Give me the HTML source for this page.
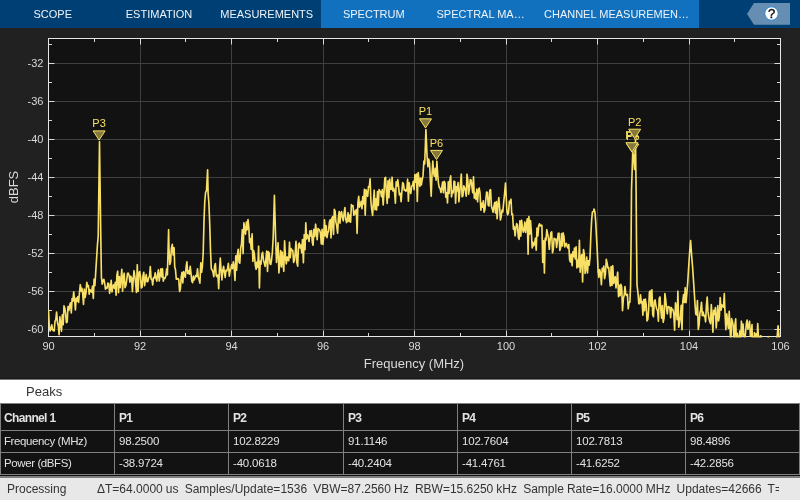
<!DOCTYPE html>
<html lang="en"><head><meta charset="utf-8"><title>Spectrum Analyzer</title>
<style>
html,body{margin:0;padding:0;background:#212121;}
body{width:800px;height:500px;position:relative;overflow:hidden;font-family:"Liberation Sans",Arial,sans-serif;}
svg,#tb,#pkh,#tbl,#sb{will-change:transform;}
#tb{position:absolute;left:0;top:0;width:800px;height:28px;background:#003f73;}
#tb .ctx{position:absolute;left:321px;top:0;width:378px;height:28px;background:#1171be;}
#tb .tab{position:absolute;top:0;height:28px;line-height:28px;font-size:11px;color:#eef3f8;text-align:center;white-space:nowrap;}
#help{position:absolute;left:747px;top:3px;}
.tk{font:11px "Liberation Sans",Arial,sans-serif;fill:#d9d9d9;}
.ax{font:13px "Liberation Sans",Arial,sans-serif;fill:#d9d9d9;}
.pk{font:11px "Liberation Sans",Arial,sans-serif;fill:#f7e065;}
#pkh{position:absolute;left:0;top:378px;width:800px;height:25px;box-sizing:border-box;border-top:1px solid #191919;box-shadow:inset 0 1px 0 #777;background:#fff;color:#333;font-size:13px;line-height:25px;}
#pkh span{position:absolute;left:26px;}
#tbl{position:absolute;left:0;top:403px;width:800px;height:74px;background:#121212;}
#tbl .c{position:absolute;color:#e2e2e2;font-size:11.5px;letter-spacing:-0.4px;padding-left:3px;box-sizing:border-box;white-space:nowrap;overflow:hidden;}
#tbl .n{letter-spacing:-0.2px;padding-left:4px;}
#tbl .h{font-weight:bold;font-size:12px;letter-spacing:-0.65px;}
#tbl i{position:absolute;background:#808080;display:block;}
#sb{position:absolute;left:0;top:476px;width:800px;height:24px;background:#e8e8e8;border-top:2px solid #7e7e7e;box-sizing:border-box;word-spacing:-0.25px;color:#333;font-size:12px;line-height:25px;white-space:nowrap;overflow:hidden;}
#sb span{position:absolute;top:-1px}
</style></head><body>
<div id="tb"><div class="ctx"></div>
<div class="tab" style="left:0;width:105.5px">SCOPE</div>
<div class="tab" style="left:107px;width:104px">ESTIMATION</div>
<div class="tab" style="left:214.7px;width:104px">MEASUREMENTS</div>
<div class="tab" style="left:321.8px;width:104px">SPECTRUM</div>
<div class="tab" style="left:428.6px;width:104px">SPECTRAL MA…</div>
<div class="tab" style="left:544px;text-align:left">CHANNEL MEASUREMEN…</div>
<svg id="help" width="44" height="22" viewBox="0 0 44 22"><path d="M0 11L7 0H43V21.8H7Z" fill="#668eb2"/><circle cx="24.5" cy="10.5" r="6.7" fill="#fff" stroke="#2a86d4" stroke-width="0.9"/><text x="24.5" y="15.2" text-anchor="middle" style="font:13px 'Liberation Sans',Arial,sans-serif" fill="#111" stroke="#111" stroke-width="0.45">?</text></svg>
</div>
<svg width="800" height="352" viewBox="0 28 800 352" style="position:absolute;left:0;top:28px">
<rect x="0" y="28" width="800" height="352" fill="#212121"/>
<rect x="48" y="38" width="733" height="299" fill="#121212"/>
<path d="M140.5 39V336M231.5 39V336M323.5 39V336M414.5 39V336M506.5 39V336M597.5 39V336M689.5 39V336M49 329.5H780M49 291.5H780M49 253.5H780M49 215.5H780M49 177.5H780M49 139.5H780M49 101.5H780M49 63.5H780" stroke="#3f3f3f" stroke-width="1" fill="none"/>
<rect x="48.5" y="38.5" width="732" height="298" fill="none" stroke="#e6e6e6" stroke-width="1"/>
<path d="M94.5 336v-3.0M94.5 39v3.0M140.5 336v-5.5M140.5 39v5.5M185.5 336v-3.0M185.5 39v3.0M231.5 336v-5.5M231.5 39v5.5M277.5 336v-3.0M277.5 39v3.0M323.5 336v-5.5M323.5 39v5.5M368.5 336v-3.0M368.5 39v3.0M414.5 336v-5.5M414.5 39v5.5M460.5 336v-3.0M460.5 39v3.0M506.5 336v-5.5M506.5 39v5.5M551.5 336v-3.0M551.5 39v3.0M597.5 336v-5.5M597.5 39v5.5M643.5 336v-3.0M643.5 39v3.0M689.5 336v-5.5M689.5 39v5.5M734.5 336v-3.0M734.5 39v3.0M49 329.5h5.5M780 329.5h-5.5M49 310.5h3.0M780 310.5h-3.0M49 291.5h5.5M780 291.5h-5.5M49 272.5h3.0M780 272.5h-3.0M49 253.5h5.5M780 253.5h-5.5M49 234.5h3.0M780 234.5h-3.0M49 215.5h5.5M780 215.5h-5.5M49 196.5h3.0M780 196.5h-3.0M49 177.5h5.5M780 177.5h-5.5M49 158.5h3.0M780 158.5h-3.0M49 139.5h5.5M780 139.5h-5.5M49 120.5h3.0M780 120.5h-3.0M49 101.5h5.5M780 101.5h-5.5M49 82.5h3.0M780 82.5h-3.0M49 63.5h5.5M780 63.5h-5.5M49 44.5h3.0M780 44.5h-3.0" stroke="#d9d9d9" stroke-width="1" fill="none"/>
<clipPath id="c"><rect x="48" y="38" width="733" height="299.5"/></clipPath>
<path clip-path="url(#c)" d="M48.5 310.2 L49.3 326.1 L50.1 331.0 L50.9 328.5 L51.8 324.9 L52.6 330.1 L53.4 330.7 L54.2 331.0 L55.0 321.3 L55.8 319.6 L56.6 312.1 L57.5 322.8 L58.3 325.7 L59.1 334.8 L59.9 316.8 L60.7 324.3 L61.5 331.2 L62.3 314.8 L63.2 324.6 L64.0 305.9 L64.8 308.2 L65.6 313.4 L66.4 322.6 L67.2 322.0 L68.0 306.6 L68.9 310.4 L69.7 305.0 L70.5 302.8 L71.3 312.9 L72.1 298.6 L72.9 301.1 L73.7 291.8 L74.6 300.3 L75.4 309.9 L76.2 298.1 L77.0 301.1 L77.8 296.7 L78.6 302.4 L79.4 293.3 L80.3 284.7 L81.1 291.1 L81.9 288.2 L82.7 293.7 L83.5 304.4 L84.3 289.0 L85.1 297.5 L86.0 292.8 L86.8 282.4 L87.6 286.6 L88.4 285.5 L89.2 294.1 L90.0 289.7 L90.8 291.4 L91.7 292.1 L92.5 286.2 L93.3 298.4 L94.1 279.2 L94.9 285.7 L95.7 272.4 L96.5 260.1 L97.4 245.2 L98.2 236.5 L99.0 178.8 L99.5 141.7 L100.6 222.5 L101.4 277.1 L102.2 284.1 L103.1 280.3 L103.9 279.3 L104.7 283.5 L105.5 289.3 L106.3 287.3 L107.1 288.2 L107.9 283.1 L108.8 283.7 L109.6 293.3 L110.4 288.6 L111.2 280.3 L112.0 292.0 L112.8 286.6 L113.6 284.8 L114.5 288.4 L115.3 282.4 L116.1 295.1 L116.9 275.2 L117.7 271.2 L118.5 292.7 L119.3 276.6 L120.2 287.7 L121.0 278.5 L121.8 269.3 L122.6 291.3 L123.4 277.4 L124.2 273.2 L125.0 287.6 L125.9 285.5 L126.7 280.4 L127.5 273.4 L128.3 273.2 L129.1 275.5 L129.9 282.2 L130.7 276.2 L131.6 277.8 L132.4 291.7 L133.2 279.9 L134.0 270.7 L134.8 276.0 L135.6 282.8 L136.4 292.5 L137.3 264.7 L138.1 291.4 L138.9 273.5 L139.7 271.5 L140.5 276.6 L141.3 287.9 L142.1 287.1 L143.0 275.6 L143.8 272.3 L144.6 285.6 L145.4 279.8 L146.2 274.5 L147.0 281.6 L147.8 281.7 L148.7 277.4 L149.5 276.4 L150.3 266.6 L151.1 279.1 L151.9 279.2 L152.7 284.9 L153.5 277.5 L154.4 278.0 L155.2 272.9 L156.0 278.4 L156.8 281.1 L157.6 274.8 L158.4 269.8 L159.2 281.0 L160.1 275.4 L160.9 268.9 L161.7 277.0 L162.5 268.7 L163.3 281.1 L164.1 278.1 L164.9 278.4 L165.8 276.0 L166.6 269.1 L167.4 274.8 L168.6 229.7 L169.0 248.5 L169.8 264.5 L170.6 262.0 L171.4 248.5 L172.3 244.4 L173.1 254.9 L174.1 247.7 L174.7 266.8 L175.5 269.8 L176.3 279.2 L177.1 279.1 L178.0 278.5 L178.8 279.8 L179.6 291.5 L180.4 288.7 L181.2 277.3 L182.0 272.3 L182.8 283.0 L183.7 271.6 L184.5 274.8 L185.3 277.2 L186.1 267.2 L186.9 261.9 L187.7 273.4 L188.5 270.9 L189.4 274.1 L190.2 266.4 L191.0 273.4 L191.8 281.1 L192.6 282.7 L193.4 276.1 L194.2 279.9 L195.1 277.2 L195.9 275.3 L196.7 276.4 L197.5 268.9 L198.3 277.5 L199.1 279.4 L199.9 283.2 L200.8 262.9 L201.6 272.3 L202.4 266.3 L203.2 252.8 L204.0 221.0 L204.8 201.0 L205.6 192.4 L206.5 190.6 L207.6 169.8 L208.1 193.2 L208.9 203.3 L209.7 223.5 L210.5 250.2 L211.3 269.0 L212.2 269.9 L213.0 272.2 L213.8 276.6 L214.6 266.2 L215.4 263.5 L216.2 275.6 L217.0 276.7 L217.9 274.9 L218.7 288.6 L219.5 269.7 L220.3 258.0 L221.1 270.7 L221.9 280.0 L222.7 270.6 L223.6 266.3 L224.4 272.5 L225.2 277.4 L226.0 270.3 L226.8 270.9 L227.6 268.2 L228.4 263.3 L229.3 276.1 L230.1 271.1 L230.9 268.3 L231.7 264.7 L232.5 268.7 L233.3 261.9 L234.1 266.4 L235.0 280.4 L235.8 255.8 L236.6 270.2 L237.4 254.7 L238.2 249.3 L239.0 262.0 L239.8 263.2 L240.7 247.8 L241.5 244.1 L242.3 229.7 L243.1 253.6 L243.9 222.8 L244.7 228.8 L245.5 234.2 L246.4 222.1 L247.2 229.8 L248.0 219.6 L248.8 227.1 L249.6 242.7 L250.4 238.5 L251.2 249.5 L252.1 233.9 L252.9 261.4 L253.7 250.6 L254.5 255.2 L255.3 265.1 L256.1 269.3 L256.9 262.0 L257.8 267.4 L258.6 246.2 L259.4 287.9 L260.2 261.2 L261.0 264.1 L261.8 255.1 L262.6 252.3 L263.5 260.2 L264.3 263.1 L265.1 266.4 L265.9 259.3 L266.7 251.1 L267.5 271.4 L268.3 251.7 L269.2 252.9 L270.0 263.8 L270.8 264.4 L271.6 259.5 L272.4 251.9 L273.2 237.0 L274.4 195.4 L274.9 213.2 L275.7 240.8 L276.5 262.4 L277.3 252.2 L278.1 242.7 L278.9 273.0 L279.7 263.0 L280.6 250.5 L281.4 266.9 L282.2 252.1 L283.0 262.6 L283.8 271.3 L284.6 240.8 L285.4 256.4 L286.3 263.8 L287.1 256.9 L287.9 260.5 L288.7 260.7 L289.5 242.2 L290.3 257.7 L291.1 248.5 L292.0 250.4 L292.8 250.5 L293.6 262.4 L294.4 260.2 L295.2 253.0 L296.0 241.4 L296.8 262.4 L297.7 266.1 L298.5 244.6 L299.3 243.1 L300.1 248.0 L300.9 245.1 L301.7 252.7 L302.5 239.5 L303.4 262.8 L304.2 234.7 L305.0 249.7 L305.8 222.8 L306.6 238.9 L307.4 234.8 L308.2 237.2 L309.1 241.5 L309.9 230.9 L310.7 235.9 L311.5 230.5 L312.3 242.2 L313.1 245.3 L313.9 229.3 L314.8 236.5 L315.6 224.2 L316.4 232.1 L317.2 239.6 L318.0 228.6 L318.8 229.3 L319.6 230.3 L320.5 233.0 L321.3 244.0 L322.1 229.4 L322.9 244.5 L323.7 236.3 L324.5 219.8 L325.3 235.9 L326.2 225.7 L327.0 237.6 L327.8 232.9 L328.6 230.7 L329.4 222.0 L330.2 219.7 L331.0 238.0 L331.9 218.4 L332.7 216.6 L333.5 234.5 L334.3 209.4 L335.1 211.0 L335.9 222.1 L336.7 225.6 L337.6 233.2 L338.4 217.7 L339.2 211.6 L340.0 223.1 L340.8 212.9 L341.6 211.7 L342.4 217.6 L343.3 220.8 L344.1 213.0 L344.9 207.6 L345.7 218.5 L346.5 222.7 L347.3 221.0 L348.1 212.7 L349.0 221.6 L349.8 215.0 L350.6 222.1 L351.4 204.6 L352.2 206.1 L353.0 205.7 L353.8 215.2 L354.7 211.1 L355.5 213.8 L356.3 209.5 L357.1 233.4 L357.9 202.9 L358.7 196.3 L359.5 207.1 L360.4 204.8 L361.2 201.4 L362.0 208.7 L362.8 196.5 L363.6 204.0 L364.4 189.3 L365.2 215.1 L366.1 189.9 L366.9 193.3 L367.7 196.3 L368.5 186.5 L369.3 186.8 L370.1 178.9 L370.9 201.5 L371.8 209.9 L372.6 215.5 L373.4 202.2 L374.2 190.2 L375.0 209.7 L375.8 198.9 L376.6 210.0 L377.5 191.6 L378.3 205.5 L379.1 189.6 L379.9 191.3 L380.7 191.8 L381.5 196.7 L382.3 189.6 L383.2 205.0 L384.0 192.6 L384.8 178.2 L385.6 177.4 L386.4 193.2 L387.2 203.5 L388.0 180.8 L388.9 197.6 L389.7 179.0 L390.5 189.5 L391.3 189.3 L392.1 177.2 L392.9 191.0 L393.7 188.3 L394.6 192.1 L395.4 203.2 L396.2 181.8 L397.0 186.1 L397.8 179.7 L398.6 186.8 L399.4 194.8 L400.3 193.3 L401.1 201.6 L401.9 191.4 L402.7 182.6 L403.5 183.9 L404.3 190.3 L405.1 189.6 L406.0 191.3 L406.8 190.4 L407.6 179.2 L408.4 201.1 L409.2 182.7 L410.0 190.5 L410.8 193.5 L411.7 186.1 L412.5 185.5 L413.3 181.3 L414.1 189.6 L414.9 174.7 L415.7 182.2 L416.5 174.0 L417.3 201.4 L418.2 172.6 L419.0 179.8 L419.8 186.3 L420.6 178.1 L421.4 184.8 L422.2 179.5 L423.0 175.9 L423.9 161.0 L424.7 163.9 L425.5 142.1 L425.9 129.6 L427.1 156.8 L427.9 166.8 L428.7 159.1 L429.6 163.3 L430.4 181.2 L431.2 196.3 L432.0 175.1 L432.8 161.0 L433.6 172.6 L434.4 176.2 L435.3 168.3 L436.1 180.1 L436.9 161.2 L437.7 174.5 L438.5 183.8 L439.3 187.6 L440.1 188.3 L441.0 192.5 L441.8 187.5 L442.6 182.0 L443.4 192.8 L444.2 181.4 L445.0 182.9 L445.8 197.3 L446.7 192.9 L447.5 203.0 L448.3 181.8 L449.1 193.5 L449.9 180.4 L450.7 175.9 L451.5 197.0 L452.4 190.9 L453.2 192.8 L454.0 181.2 L454.8 181.7 L455.6 203.1 L456.4 186.5 L457.2 190.9 L458.1 182.6 L458.9 201.8 L459.7 193.3 L460.5 183.4 L461.3 174.0 L462.1 196.8 L462.9 195.9 L463.8 185.9 L464.6 187.8 L465.4 190.6 L466.2 196.1 L467.0 174.2 L467.8 179.7 L468.6 194.2 L469.5 188.3 L470.3 179.5 L471.1 180.2 L471.9 186.5 L472.7 192.6 L473.5 176.8 L474.3 198.2 L475.2 193.3 L476.0 199.3 L476.8 189.0 L477.6 201.8 L478.4 190.5 L479.2 188.1 L480.0 192.8 L480.9 210.2 L481.7 203.2 L482.5 207.2 L483.3 200.8 L484.1 212.1 L484.9 209.8 L485.7 200.7 L486.6 192.0 L487.4 192.4 L488.2 205.2 L489.0 206.0 L489.8 190.4 L490.6 189.7 L491.4 206.1 L492.3 209.1 L493.1 212.2 L493.9 206.4 L494.7 202.6 L495.5 213.0 L496.3 201.5 L497.1 218.8 L498.0 204.3 L498.8 197.6 L499.6 206.9 L500.4 220.0 L501.2 216.5 L502.0 210.1 L502.8 211.9 L503.7 202.4 L504.5 194.5 L505.5 183.1 L506.1 194.3 L506.9 211.2 L507.7 214.8 L508.5 212.8 L509.4 201.2 L510.2 203.2 L511.0 199.2 L511.8 214.7 L512.6 214.2 L513.4 229.1 L514.2 226.6 L515.1 235.8 L515.9 228.3 L516.7 223.5 L517.5 225.4 L518.3 237.3 L519.1 239.3 L519.9 220.8 L520.8 236.2 L521.6 220.2 L522.4 227.0 L523.2 232.2 L524.0 230.2 L524.8 222.0 L525.6 232.4 L526.5 224.2 L527.3 218.9 L528.1 254.3 L528.9 216.6 L529.7 234.2 L530.5 220.6 L531.3 231.3 L532.2 248.0 L533.0 242.3 L533.8 245.8 L534.6 243.8 L535.4 238.2 L536.2 250.2 L537.0 228.0 L537.9 235.9 L538.7 225.9 L539.5 223.8 L540.3 225.9 L541.1 225.2 L541.9 225.4 L542.7 262.5 L543.6 240.9 L544.4 273.1 L545.2 238.4 L546.0 240.1 L546.8 229.7 L547.6 233.8 L548.4 237.8 L549.3 249.4 L550.1 240.3 L550.9 232.8 L551.7 231.8 L552.5 252.8 L553.3 249.4 L554.1 238.3 L555.0 239.5 L555.8 239.0 L556.6 247.4 L557.4 240.8 L558.2 233.3 L559.0 233.2 L559.8 250.5 L560.7 247.3 L561.5 233.7 L562.3 245.9 L563.1 232.9 L563.9 236.1 L564.7 246.9 L565.5 244.2 L566.4 243.3 L567.2 246.9 L568.0 248.1 L568.8 244.5 L569.6 259.8 L570.4 262.0 L571.2 254.2 L572.1 265.8 L572.9 251.8 L573.7 256.7 L574.5 248.0 L575.3 258.9 L576.1 246.9 L576.9 268.0 L577.8 260.1 L578.6 267.0 L579.4 240.3 L580.2 272.2 L581.0 257.5 L581.8 254.6 L582.6 281.9 L583.5 249.5 L584.3 254.0 L585.1 273.4 L585.9 268.6 L586.7 257.0 L587.5 272.9 L588.3 260.9 L589.2 265.2 L590.0 257.4 L590.8 236.9 L591.6 220.7 L592.4 212.1 L593.6 211.6 L594.0 209.0 L594.9 211.9 L595.7 221.9 L596.5 237.2 L597.3 251.7 L598.1 271.5 L598.9 277.4 L599.7 269.7 L600.6 273.7 L601.4 284.8 L602.2 268.3 L603.0 271.5 L603.8 266.0 L604.6 278.7 L605.4 274.2 L606.3 259.4 L607.1 263.1 L607.9 268.0 L608.7 267.5 L609.5 276.6 L610.3 286.0 L611.1 266.6 L612.0 285.4 L612.8 265.7 L613.6 283.5 L614.4 279.3 L615.2 276.7 L616.0 288.0 L616.8 279.6 L617.7 272.2 L618.5 296.6 L619.3 285.2 L620.1 295.6 L620.9 284.4 L621.7 287.1 L622.5 310.6 L623.4 298.4 L624.2 295.1 L625.0 286.5 L625.8 294.7 L626.6 295.3 L627.4 294.3 L628.2 308.8 L629.1 302.4 L629.9 302.2 L630.6 285.0 L631.1 240.0 L631.5 190.0 L632.7 153.4 L633.6 154.8 L634.5 169.5 L635.5 140.0 L636.1 190.0 L636.5 240.0 L637.0 285.0 L638.0 293.1 L638.8 303.7 L639.6 303.7 L640.5 294.8 L641.3 303.0 L642.1 301.7 L642.9 315.1 L643.7 299.6 L644.5 310.7 L645.3 299.0 L646.2 304.6 L647.0 321.0 L647.8 319.4 L648.6 310.6 L649.4 292.1 L650.2 290.9 L651.0 306.1 L651.9 289.9 L652.7 314.4 L653.5 316.8 L654.3 301.0 L655.1 299.9 L655.9 305.6 L656.7 309.0 L657.6 310.9 L658.4 321.3 L659.2 298.3 L660.0 296.9 L660.8 309.4 L661.6 318.3 L662.4 305.5 L663.2 322.3 L664.1 317.6 L664.9 293.5 L665.7 299.3 L666.5 308.2 L667.3 313.8 L668.1 306.5 L668.9 306.8 L669.8 307.5 L670.6 317.7 L671.4 307.6 L672.2 309.8 L673.0 309.9 L673.8 313.8 L674.6 330.1 L675.5 302.9 L676.3 306.6 L677.1 319.6 L677.9 291.2 L678.7 327.2 L679.5 323.6 L680.3 317.2 L681.2 305.4 L682.0 329.8 L682.8 301.2 L683.6 294.7 L684.4 302.4 L685.2 287.7 L686.0 302.7 L686.9 292.6 L687.7 282.6 L688.5 269.8 L689.3 257.3 L690.1 246.0 L690.6 240.6 L691.7 256.4 L692.6 267.1 L693.4 279.2 L694.2 291.1 L695.0 304.1 L695.8 314.3 L696.6 315.0 L697.4 300.6 L698.3 329.4 L699.1 324.8 L699.9 313.2 L700.7 309.9 L701.5 302.4 L702.3 315.6 L703.1 312.0 L704.0 316.0 L704.8 315.7 L705.6 321.8 L706.4 305.7 L707.2 297.0 L708.0 311.9 L708.8 317.2 L709.7 321.3 L710.5 323.6 L711.3 304.5 L712.1 316.3 L712.9 332.2 L713.7 310.3 L714.5 314.5 L715.4 307.5 L716.2 327.9 L717.0 318.7 L717.8 305.5 L718.6 320.9 L719.4 316.1 L720.2 297.6 L721.1 310.1 L721.9 304.8 L722.7 306.2 L723.5 307.1 L724.3 293.6 L725.1 315.2 L725.9 329.6 L726.8 313.8 L727.6 322.3 L728.4 328.5 L729.2 311.3 L730.0 326.8 L730.8 344.4 L731.6 318.6 L732.5 321.9 L733.3 326.3 L734.1 345.7 L734.9 325.0 L735.7 318.8 L736.5 346.5 L737.3 333.4 L738.2 339.4 L739.0 343.0 L739.8 331.1 L740.6 348.5 L741.4 321.2 L742.2 335.2 L743.0 324.1 L743.9 335.7 L744.7 339.3 L745.5 333.5 L746.3 323.7 L747.1 320.1 L747.9 329.2 L748.7 325.9 L749.6 321.2 L750.4 336.2 L751.2 334.7 L752.0 324.5 L752.8 367.7 L753.6 360.1 L754.4 332.6 L755.3 337.0 L756.1 333.9 L756.9 349.6 L757.7 323.5 L758.5 338.9 L759.3 342.9 L760.1 336.3 L761.0 335.8 L761.8 346.3 L762.6 344.7 L763.4 346.4 L764.2 346.0 L765.0 351.9 L765.8 349.8 L766.7 359.5 L767.5 351.9 L768.3 336.7 L769.1 352.0 L769.9 347.4 L770.7 347.9 L771.5 357.0 L772.4 344.5 L773.2 360.3 L774.0 355.5 L774.8 342.6 L775.6 340.8 L776.4 339.1 L777.2 336.1 L778.1 325.8 L778.9 335.8 L779.7 347.3 L780.5 343.8" stroke="#f7e065" stroke-width="1.65" stroke-linejoin="round" fill="none"/>
<path d="M436.5 159.6l-6 -9.2h12z" fill="#85793b" stroke="#f7e065" stroke-width="1"/>
<text x="436.5" y="146.7" text-anchor="middle" class="pk">P6</text>
<path d="M632.8 153.3l-6 -9.2h12z" fill="#85793b" stroke="#f7e065" stroke-width="1"/>
<text x="632.8" y="140.4" text-anchor="middle" class="pk">P5</text>
<path d="M631.9 151.9l-6 -9.2h12z" fill="#85793b" stroke="#f7e065" stroke-width="1"/>
<text x="631.9" y="139.0" text-anchor="middle" class="pk">P4</text>
<path d="M99.1 140.1l-6 -9.2h12z" fill="#85793b" stroke="#f7e065" stroke-width="1"/>
<text x="99.1" y="127.2" text-anchor="middle" class="pk">P3</text>
<path d="M634.7 138.4l-6 -9.2h12z" fill="#85793b" stroke="#f7e065" stroke-width="1"/>
<text x="634.7" y="125.5" text-anchor="middle" class="pk">P2</text>
<path d="M425.5 128.0l-6 -9.2h12z" fill="#85793b" stroke="#f7e065" stroke-width="1"/>
<text x="425.5" y="115.1" text-anchor="middle" class="pk">P1</text>
<text x="48.5" y="350" text-anchor="middle" class="tk">90</text>
<text x="140.0" y="350" text-anchor="middle" class="tk">92</text>
<text x="231.5" y="350" text-anchor="middle" class="tk">94</text>
<text x="323.0" y="350" text-anchor="middle" class="tk">96</text>
<text x="414.5" y="350" text-anchor="middle" class="tk">98</text>
<text x="506.0" y="350" text-anchor="middle" class="tk">100</text>
<text x="597.5" y="350" text-anchor="middle" class="tk">102</text>
<text x="689.0" y="350" text-anchor="middle" class="tk">104</text>
<text x="780.5" y="350" text-anchor="middle" class="tk">106</text>
<text x="43.4" y="333.4" text-anchor="end" class="tk">-60</text>
<text x="43.4" y="295.4" text-anchor="end" class="tk">-56</text>
<text x="43.4" y="257.4" text-anchor="end" class="tk">-52</text>
<text x="43.4" y="219.4" text-anchor="end" class="tk">-48</text>
<text x="43.4" y="181.4" text-anchor="end" class="tk">-44</text>
<text x="43.4" y="143.4" text-anchor="end" class="tk">-40</text>
<text x="43.4" y="105.4" text-anchor="end" class="tk">-36</text>
<text x="43.4" y="67.4" text-anchor="end" class="tk">-32</text>
<text x="414" y="368" text-anchor="middle" class="ax">Frequency (MHz)</text>
<text transform="translate(18,187) rotate(-90)" text-anchor="middle" class="ax">dBFS</text>
</svg>
<div id="pkh"><span>Peaks</span></div>
<div id="tbl"><div class="c h" style="left:1px;top:1px;width:113px;height:26px;line-height:28px">Channel 1</div><div class="c h n" style="left:115px;top:1px;width:113px;height:26px;line-height:28px">P1</div><div class="c h n" style="left:229px;top:1px;width:114px;height:26px;line-height:28px">P2</div><div class="c h n" style="left:344px;top:1px;width:113px;height:26px;line-height:28px">P3</div><div class="c h n" style="left:458px;top:1px;width:113px;height:26px;line-height:28px">P4</div><div class="c h n" style="left:572px;top:1px;width:113px;height:26px;line-height:28px">P5</div><div class="c h n" style="left:686px;top:1px;width:113px;height:26px;line-height:28px">P6</div><div class="c" style="left:1px;top:28px;width:113px;height:21px;line-height:20px">Frequency (MHz)</div><div class="c n" style="left:115px;top:28px;width:113px;height:21px;line-height:20px">98.2500</div><div class="c n" style="left:229px;top:28px;width:114px;height:21px;line-height:20px">102.8229</div><div class="c n" style="left:344px;top:28px;width:113px;height:21px;line-height:20px">91.1146</div><div class="c n" style="left:458px;top:28px;width:113px;height:21px;line-height:20px">102.7604</div><div class="c n" style="left:572px;top:28px;width:113px;height:21px;line-height:20px">102.7813</div><div class="c n" style="left:686px;top:28px;width:113px;height:21px;line-height:20px">98.4896</div><div class="c" style="left:1px;top:50px;width:113px;height:21px;line-height:20px">Power (dBFS)</div><div class="c n" style="left:115px;top:50px;width:113px;height:21px;line-height:20px">-38.9724</div><div class="c n" style="left:229px;top:50px;width:114px;height:21px;line-height:20px">-40.0618</div><div class="c n" style="left:344px;top:50px;width:113px;height:21px;line-height:20px">-40.2404</div><div class="c n" style="left:458px;top:50px;width:113px;height:21px;line-height:20px">-41.4761</div><div class="c n" style="left:572px;top:50px;width:113px;height:21px;line-height:20px">-41.6252</div><div class="c n" style="left:686px;top:50px;width:113px;height:21px;line-height:20px">-42.2856</div><i style="left:0px;top:0;width:1px;height:72px"></i><i style="left:114px;top:0;width:1px;height:72px"></i><i style="left:228px;top:0;width:1px;height:72px"></i><i style="left:343px;top:0;width:1px;height:72px"></i><i style="left:457px;top:0;width:1px;height:72px"></i><i style="left:571px;top:0;width:1px;height:72px"></i><i style="left:685px;top:0;width:1px;height:72px"></i><i style="left:799px;top:0;width:1px;height:72px"></i><i style="left:0;top:0px;width:800px;height:1px"></i><i style="left:0;top:27px;width:800px;height:1px"></i><i style="left:0;top:49px;width:800px;height:1px"></i><i style="left:0;top:71px;width:800px;height:1px"></i></div>
<div id="sb"><span style="left:7px">Processing</span><span style="left:97px;width:682px;overflow:hidden">ΔT=64.0000 us&nbsp; Samples/Update=1536&nbsp; VBW=87.2560 Hz&nbsp; RBW=15.6250 kHz&nbsp; Sample Rate=16.0000 MHz&nbsp; Updates=42666&nbsp; T=2.7306 s</span></div>
</body></html>
